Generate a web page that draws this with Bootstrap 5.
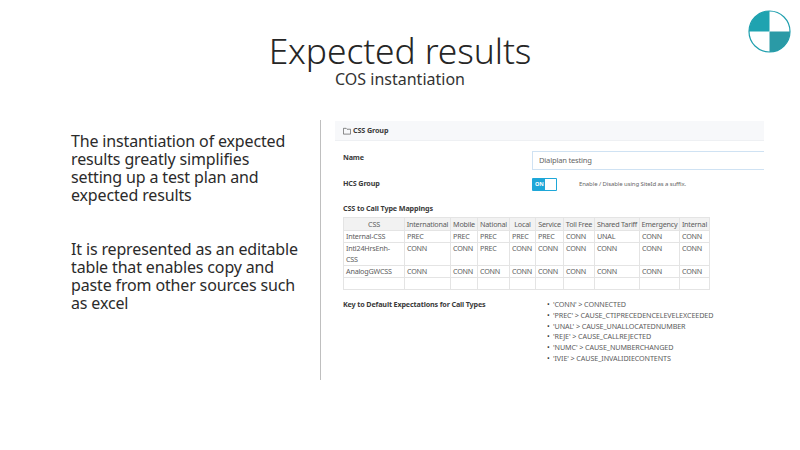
<!DOCTYPE html>
<html lang="en">
<head>
<meta charset="utf-8">
<title>Expected results</title>
<link href="https://cdn.jsdelivr.net/npm/bootstrap@5.3.0/dist/css/bootstrap.min.css" rel="stylesheet">
<style>
html,body{width:800px;height:450px;overflow:hidden;background:#fff;}
body{font-family:"Noto Sans","Open Sans",sans-serif;color:#262626;position:relative;}
.slide-logo{position:absolute;left:748px;top:10px;width:43px;height:43px;}
.slide-head{padding-top:30px;height:120px;}
.slide-title{font-size:35.4px;line-height:40px;font-weight:300;color:#262626;margin:0;letter-spacing:-.1px;}
.slide-sub{font-size:16px;line-height:18px;color:#333;margin:0;}
.slide-body{height:260px;}
.left-col{width:321px;padding:12px 0 0 71px;border-right:1px solid #bfbfbf;font-size:16px;line-height:18px;letter-spacing:-.15px;color:#2b2b2b;flex:none;}
.left-col p{margin:0 0 36px;}
.shot{width:429px;margin-left:14px;font-size:7.2px;color:#5c5c5c;letter-spacing:-.2px;flex:none;overflow:hidden;}
.shot-head{height:20px;margin-top:1px;background:#f7f8fa;border-bottom:1px solid #eef0f3;font-weight:700;color:#3a3a3a;padding-left:8px;line-height:17px;gap:2px;letter-spacing:-.12px;}
.shot-head svg{width:8px;height:8px;}
.form-line{padding-left:8px;}
.lbl{width:189px;flex:none;font-weight:700;color:#3a3a3a;letter-spacing:-.15px;}
.name-line{height:27px;margin-top:10px;}
.name-line .lbl{padding-top:1px;}
.name-box{flex:1;height:19px;border:1px solid #cfe2f3;border-right:0;padding-left:6px;line-height:17px;font-size:7.6px;color:#666;}
.hcs-line{height:13px;line-height:13px;}
.hcs-line .lbl{padding-bottom:2px;}
.toggle-on{width:25px;height:13px;background:#1ea7d8;border-radius:1px;color:#fff;font-size:5.5px;font-weight:700;padding:1px 1px 1px 3px;line-height:11px;margin-right:22px;letter-spacing:0;}
.toggle-knob{width:11px;height:11px;background:#fff;margin-left:auto;}
.hint{font-size:6px;color:#666;letter-spacing:-.1px;}
.map-title{padding-left:8px;font-weight:700;color:#3a3a3a;margin-top:11px;line-height:12px;letter-spacing:-.12px;}
.map-table{width:366px;margin:3px 0 0 8px;table-layout:fixed;border-collapse:collapse;font-size:7.2px;color:#5c5c5c;line-height:11px;}
.map-table th,.map-table td{border:1px solid #e4e4e4;padding:0 2px;font-weight:400;background:#fff;color:#5c5c5c;vertical-align:top;}
.map-table th{background:#f2f2f2;text-align:center;white-space:nowrap;padding:.5px 0;}
.key-line{padding-left:8px;margin-top:9px;line-height:10.8px;}
.key-line .lbl{width:201px;}
.key-line ul{margin:0;padding-left:9px;letter-spacing:-.1px;list-style:none;}
.key-line li{text-indent:-6px;}
.key-line li::before{content:"\2022";display:inline-block;width:6px;text-indent:0;color:#333;}
</style>
</head>
<body>
<svg class="slide-logo" viewBox="0 0 43 43" aria-hidden="true">
<circle cx="21.5" cy="21.5" r="20.5" fill="#fff" stroke="#1f9fae" stroke-width="1.2"/>
<path d="M21.5 1A20.5 20.5 0 0 0 1 21.5H21.5Z" fill="#1fa3b0"/>
<path d="M21.5 42A20.5 20.5 0 0 0 42 21.5H21.5Z" fill="#2a9aa6"/>
</svg>
<header class="slide-head text-center">
<h1 class="slide-title">Expected results</h1>
<p class="slide-sub">COS instantiation</p>
</header>
<main class="slide-body d-flex">
<section class="left-col">
<p>The instantiation of expected<br>results greatly simplifies<br>setting up a test plan and<br>expected results</p>
<p>It is represented as an editable<br>table that enables copy and<br>paste from other sources such<br>as excel</p>
</section>
<section class="shot">
<div class="shot-head d-flex align-items-center"><svg viewBox="0 0 9 8"><path d="M.5 1h3l1 1h4v5.5h-8z" fill="none" stroke="#444" stroke-width=".7"/></svg>CSS Group</div>
<div class="form-line name-line d-flex"><div class="lbl">Name</div><div class="name-box">Dialplan testing</div></div>
<div class="form-line hcs-line d-flex align-items-center"><div class="lbl">HCS Group</div><div class="toggle-on d-flex">ON<span class="toggle-knob"></span></div><span class="hint">Enable / Disable using SiteId as a suffix.</span></div>
<div class="map-title">CSS to Call Type Mappings</div>
<table class="map-table">
<colgroup><col style="width:61px"><col style="width:46px"><col style="width:27px"><col style="width:32px"><col style="width:26px"><col style="width:28px"><col style="width:31px"><col style="width:45px"><col style="width:40px"><col style="width:30px"></colgroup>
<thead><tr><th>CSS</th><th>International</th><th>Mobile</th><th>National</th><th>Local</th><th>Service</th><th>Toll Free</th><th>Shared Tariff</th><th>Emergency</th><th>Internal</th></tr></thead>
<tbody>
<tr><td>Internal-CSS</td><td>PREC</td><td>PREC</td><td>PREC</td><td>PREC</td><td>PREC</td><td>CONN</td><td>UNAL</td><td>CONN</td><td>CONN</td></tr>
<tr><td>Intl24HrsEnh-<br>CSS</td><td>CONN</td><td>CONN</td><td>PREC</td><td>CONN</td><td>CONN</td><td>CONN</td><td>CONN</td><td>CONN</td><td>CONN</td></tr>
<tr><td>AnalogGWCSS</td><td>CONN</td><td>CONN</td><td>CONN</td><td>CONN</td><td>CONN</td><td>CONN</td><td>CONN</td><td>CONN</td><td>CONN</td></tr>
<tr><td>&nbsp;</td><td></td><td></td><td></td><td></td><td></td><td></td><td></td><td></td><td></td></tr>
</tbody>
</table>
<div class="form-line key-line d-flex"><div class="lbl">Key to Default Expectations for Call Types</div>
<ul>
<li>'CONN' &gt; CONNECTED</li>
<li>'PREC' &gt; CAUSE_CTIPRECEDENCELEVELEXCEEDED</li>
<li>'UNAL' &gt; CAUSE_UNALLOCATEDNUMBER</li>
<li>'REJE' &gt; CAUSE_CALLREJECTED</li>
<li>'NUMC' &gt; CAUSE_NUMBERCHANGED</li>
<li>'IVIE' &gt; CAUSE_INVALIDIECONTENTS</li>
</ul></div>
</section>
</main>
<script src="https://cdn.jsdelivr.net/npm/bootstrap@5.3.0/dist/js/bootstrap.bundle.min.js"></script>
</body>
</html>
